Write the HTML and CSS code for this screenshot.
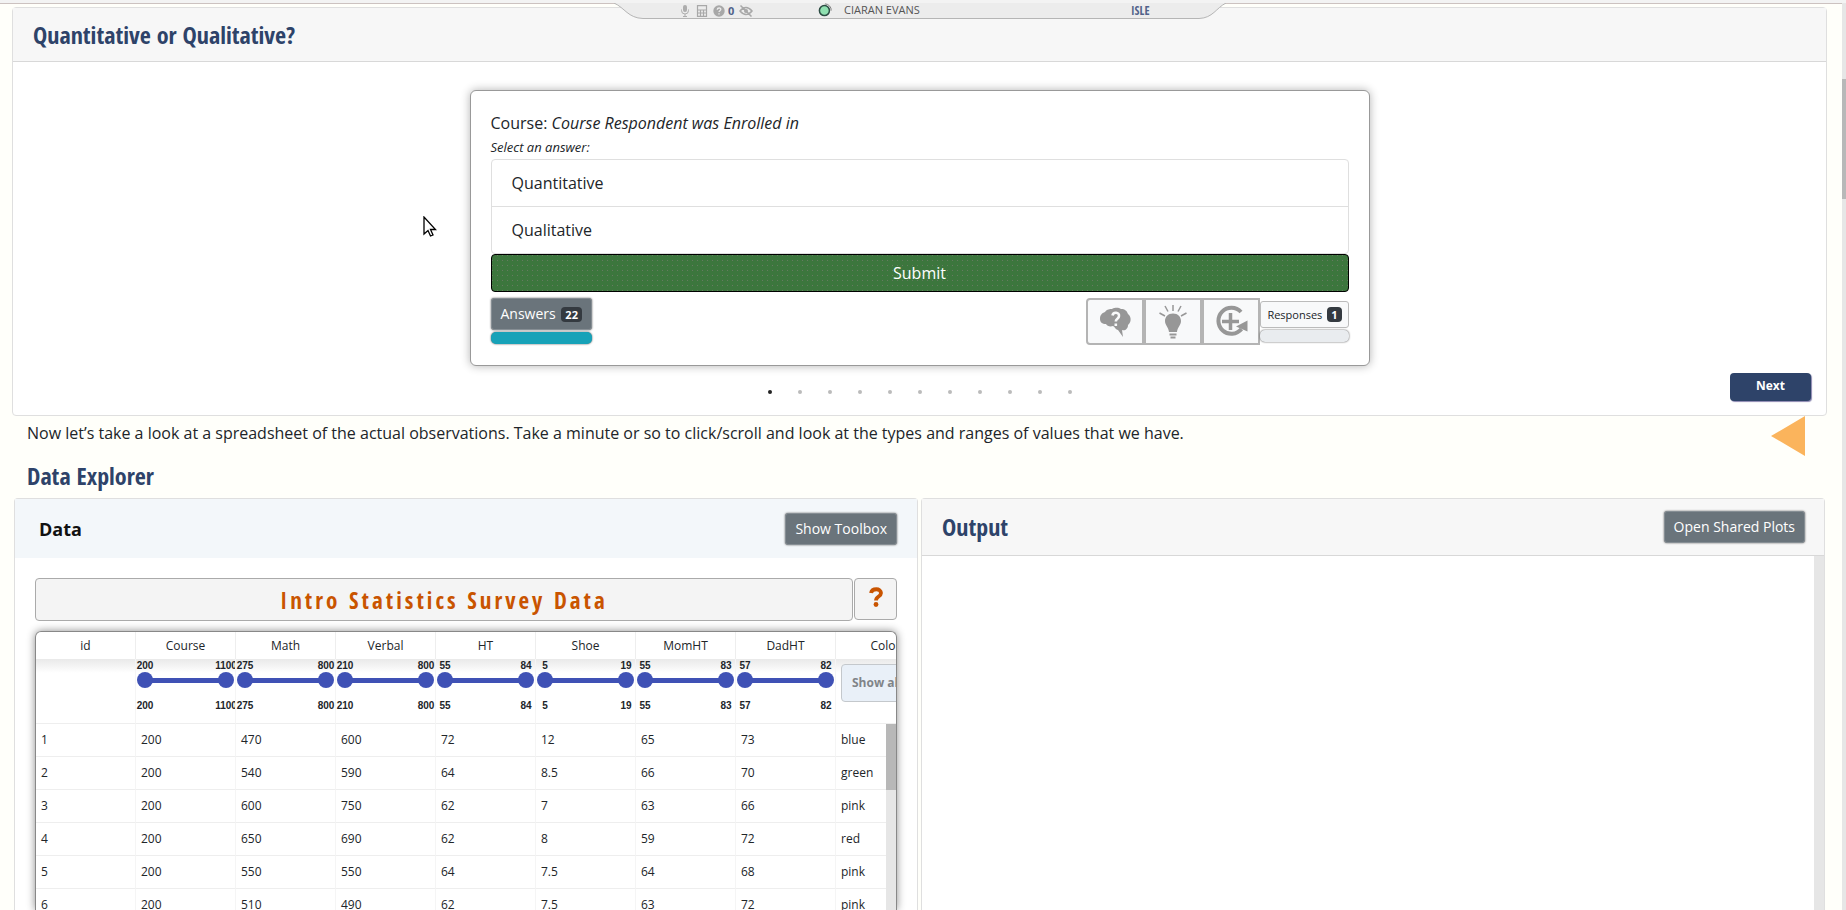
FILE: index.html
```html
<!DOCTYPE html>
<html lang="en">
<head>
<meta charset="utf-8">
<title>ISLE</title>
<link rel="stylesheet" href="styles.css">
</head>
<body>
<div class="page">
  <div class="statusbar">
    <svg class="statusbar-shape" viewBox="0 0 614 16" preserveAspectRatio="none" aria-hidden="true"><path d="M1 0C12 5 15 15 30 15.500H586C600 15 603 5 613 0" fill="#ececec" stroke="#b5b5b5"/></svg>
    <div class="status-icons">
      <svg viewBox="0 0 12 12" aria-hidden="true"><rect x="4" y="0" width="4" height="7" rx="2" fill="#adadad"/><path d="M2.500 4.500v1a3.500 3.500 0 0 0 7 0v-1M6 9v2.500M4 11.500h4" fill="none" stroke="#adadad"/></svg>
      <svg viewBox="0 0 12 12" aria-hidden="true"><path d="M1.500 .7h9v10.600h-9zM1.500 5h9M1.500 8h9M4.500 5v6.500M7.500 5v6.500" fill="none" stroke="#a8a8a8" stroke-width="1.200"/></svg>
      <svg viewBox="0 0 12 12" aria-hidden="true"><circle cx="6" cy="6" r="5.700" fill="#a8a8a8"/><path d="M4.200 4.700C4.400 2.400 7.900 2.500 7.800 4.500 7.700 5.700 6 5.700 6 7M6 8.300v1.200" fill="none" stroke="#ececec" stroke-width="1.300"/></svg>
      <b class="status-count">0</b>
      <svg viewBox="0 0 14 12" aria-hidden="true"><path d="M1 6Q7-1 13 6Q7 13 1 6zM1.500 .5l11 11" fill="none" stroke="#a8a8a8" stroke-width="1.500"/><circle cx="7" cy="6" r="2" fill="#a8a8a8"/></svg>
    </div>
    <svg class="status-dot" viewBox="0 0 12 12" aria-hidden="true"><circle cx="5.500" cy="6.500" r="4.300" fill="#8fe0b0" stroke="#2c4c43" stroke-width="1.300"/><path d="M6 .8A5.300 5.300 0 0 1 11.300 6.500" fill="none" stroke="#777" stroke-width=".8"/></svg>
    <span class="status-user">CIARAN EVANS</span>
    <span class="status-brand">ISLE</span>
  </div>

  <section class="card quiz">
    <header class="card-header"><h2 class="heading">Quantitative or Qualitative?</h2></header>
    <div class="quiz-body">
      <form class="question">
        <p class="question-title">Course: <i>Course Respondent was Enrolled in</i></p>
        <p class="question-hint">Select an answer:</p>
        <div class="choices">
          <button type="button" class="choice">Quantitative</button>
          <button type="button" class="choice">Qualitative</button>
        </div>
        <button type="button" class="submit">Submit</button>
        <div class="question-tools">
          <div class="answers">
            <button type="button" class="btn-gray">Answers <span class="badge">22</span></button>
            <div class="bar bar-teal"></div>
          </div>
          <div class="tool-group">
            <button type="button" class="tool" aria-label="Feedback: confused"><svg viewBox="0 -2 34 34"><path d="M2 12C2 8 4 6 7 5C9 2 12 2 14 2C18 0 21 1 23 2C27 2 29 4 30 7C34 10 33 16 30 18C30 22 27 24 24 23L25 30L20 23C18 23 17 20 15 19C12 20 9 19 8 17C4 17 2 15 2 12Z"/><path d="M14.500 8.500C15 4.500 21.500 5 21 9C21 12 17.800 11.500 17.800 14.500M17.800 16.500v2.600" fill="none" stroke="#f8f9fa" stroke-width="2.600"/></svg></button>
            <button type="button" class="tool" aria-label="Feedback: understood"><svg viewBox="0 0 34 36"><path d="M17 9.500C22 9.500 25 13 25 17C25 21 21.500 23 21 28H13C12.500 23 9 21 9 17C9 13 12 9.500 17 9.500Z"/><path d="M17 1v6M9 2l3 5.500M25 2l-3 5.500M3.500 9l5.500 3M30.500 9l-5.500 3" fill="none" stroke="#979797" stroke-width="1.500"/><path d="M13.500 30.500h7M14.500 33.500h5" fill="none" stroke="#979797" stroke-width="2"/></svg></button>
            <button type="button" class="tool" aria-label="Show responses"><svg viewBox="-1 0 34 34"><path d="M26 7A13 13 0 1 0 26.500 24" fill="none" stroke="#979797" stroke-width="4"/><path d="M15.500 8v17M7 16.500h17" stroke="#979797" stroke-width="3.500"/><path d="M32.500 15.500V26.500L21 21.500Z"/></svg></button>
            <div class="responses">
              <button type="button" class="btn-light">Responses <span class="badge">1</span></button>
              <div class="bar bar-light"></div>
            </div>
          </div>
        </div>
      </form>
      <div class="pager">
        <div class="dots"><i class="dot dot-on"></i><i class="dot"></i><i class="dot"></i><i class="dot"></i><i class="dot"></i><i class="dot"></i><i class="dot"></i><i class="dot"></i><i class="dot"></i><i class="dot"></i><i class="dot"></i></div>
        <button type="button" class="next">Next</button>
      </div>
    </div>
    <svg class="pointer" viewBox="0 0 14 22" aria-hidden="true"><path d="M1 1V18L5 14.500L7.500 20L10 19L7.500 13.500H12.500Z" fill="#fff" stroke="#000" stroke-width="1.300"/></svg>
  </section>

  <div class="intro">
    <p class="intro-text">Now let’s take a look at a spreadsheet of the actual observations. Take a minute or so to click/scroll and look at the types and ranges of values that we have.</p>
    <svg class="marker" viewBox="0 0 34 40" aria-hidden="true"><path d="M0 20L34 0V40Z" fill="#fbb45c"/></svg>
  </div>
  <h2 class="heading explorer-title">Data Explorer</h2>

  <div class="explorer">
    <section class="card data">
      <header class="data-header"><h3 class="data-title">Data</h3><button type="button" class="btn-gray">Show Toolbox</button></header>
      <div class="data-body">
        <div class="dataset">
          <button type="button" class="dataset-name">Intro Statistics Survey Data</button>
          <button type="button" class="dataset-help" aria-label="Dataset help"><svg viewBox="0 0 14 20"><path d="M2 6C3 1 12 1 12 6C12 10 7 9 7 13.500" fill="none" stroke="#c95400" stroke-width="3.800"/><circle cx="7" cy="17.500" r="2.400" fill="#c95400"/></svg></button>
        </div>
        <div class="grid-frame">
          <table class="grid">
            <thead>
              <tr class="names"><th>id</th><th>Course</th><th>Math</th><th>Verbal</th><th>HT</th><th>Shoe</th><th>MomHT</th><th>DadHT</th><th>Color</th></tr>
              <tr class="filters">
                <td></td>
                <td><div class="range"><div class="ends"><span>200</span><span>1100</span></div><div class="track"><input type="range" min="200" max="1100" value="200" aria-label="Course minimum"><input type="range" min="200" max="1100" value="1100" aria-label="Course maximum"></div><div class="ends"><span>200</span><span>1100</span></div></div></td>
                <td><div class="range"><div class="ends"><span>275</span><span>800</span></div><div class="track"><input type="range" min="275" max="800" value="275" aria-label="Math minimum"><input type="range" min="275" max="800" value="800" aria-label="Math maximum"></div><div class="ends"><span>275</span><span>800</span></div></div></td>
                <td><div class="range"><div class="ends"><span>210</span><span>800</span></div><div class="track"><input type="range" min="210" max="800" value="210" aria-label="Verbal minimum"><input type="range" min="210" max="800" value="800" aria-label="Verbal maximum"></div><div class="ends"><span>210</span><span>800</span></div></div></td>
                <td><div class="range"><div class="ends"><span>55</span><span>84</span></div><div class="track"><input type="range" min="55" max="84" value="55" aria-label="HT minimum"><input type="range" min="55" max="84" value="84" aria-label="HT maximum"></div><div class="ends"><span>55</span><span>84</span></div></div></td>
                <td><div class="range"><div class="ends"><span>5</span><span>19</span></div><div class="track"><input type="range" min="5" max="19" value="5" aria-label="Shoe minimum"><input type="range" min="5" max="19" value="19" aria-label="Shoe maximum"></div><div class="ends"><span>5</span><span>19</span></div></div></td>
                <td><div class="range"><div class="ends"><span>55</span><span>83</span></div><div class="track"><input type="range" min="55" max="83" value="55" aria-label="MomHT minimum"><input type="range" min="55" max="83" value="83" aria-label="MomHT maximum"></div><div class="ends"><span>55</span><span>83</span></div></div></td>
                <td><div class="range"><div class="ends"><span>57</span><span>82</span></div><div class="track"><input type="range" min="57" max="82" value="57" aria-label="DadHT minimum"><input type="range" min="57" max="82" value="82" aria-label="DadHT maximum"></div><div class="ends"><span>57</span><span>82</span></div></div></td>
                <td><select class="color-filter" aria-label="Color filter"><option>Show all</option></select></td>
              </tr>
            </thead>
            <tbody>
              <tr><td>1</td><td>200</td><td>470</td><td>600</td><td>72</td><td>12</td><td>65</td><td>73</td><td>blue</td></tr>
              <tr><td>2</td><td>200</td><td>540</td><td>590</td><td>64</td><td>8.5</td><td>66</td><td>70</td><td>green</td></tr>
              <tr><td>3</td><td>200</td><td>600</td><td>750</td><td>62</td><td>7</td><td>63</td><td>66</td><td>pink</td></tr>
              <tr><td>4</td><td>200</td><td>650</td><td>690</td><td>62</td><td>8</td><td>59</td><td>72</td><td>red</td></tr>
              <tr><td>5</td><td>200</td><td>550</td><td>550</td><td>64</td><td>7.5</td><td>64</td><td>68</td><td>pink</td></tr>
              <tr><td>6</td><td>200</td><td>510</td><td>490</td><td>62</td><td>7.5</td><td>63</td><td>72</td><td>pink</td></tr>
            </tbody>
          </table>
          <div class="grid-scroll"><div class="grid-thumb"></div></div>
        </div>
      </div>
    </section>
    <section class="card output">
      <header class="card-header output-header"><h2 class="heading">Output</h2><button type="button" class="btn-gray">Open Shared Plots</button></header>
      <div class="output-body"></div>
    </section>
  </div>
  <div class="page-scroll"><div class="page-thumb"></div></div>
</div>
</body>
</html>
```
FILE: styles.css
```css
* { box-sizing: border-box; }
body {
  margin: 0;
  background: #fffffa;
  color: #212529;
  font: 16px/24px "Open Sans", "Noto Sans", sans-serif;
}
button, select, input { font: inherit; margin: 0; }
h2, h3, p { margin: 0; }

.page {
  position: relative;
  display: flex;
  flex-direction: column;
  height: 100vh;
  overflow: hidden;
  padding: 7px 19px 0 12px;
}
.page::before {
  content: "";
  position: absolute;
  top: 0;
  left: 0;
  right: 0;
  height: 3px;
  background: #f3f3f3;
  border-bottom: 1px solid #ccc2c0;
}

.statusbar {
  position: absolute;
  z-index: 2;
  top: 3px;
  left: 50%;
  width: 614px;
  height: 16px;
  margin-left: -310px;
  font-size: 11px;
  line-height: 14px;
  color: #555;
}
.statusbar-shape { position: absolute; width: 100%; height: 16px; }
.status-icons { position: absolute; left: 66px; display: flex; align-items: center; gap: 5px; height: 15px; }
.status-icons svg { width: 12px; height: 12px; }
.status-icons svg:last-child { width: 14px; }
.status-count { color: #51628a; margin-left: -2px; }
.status-dot { position: absolute; left: 205px; width: 14px; height: 14px; }
.status-user { position: absolute; left: 231px; }
.status-brand {
  position: absolute;
  left: 518px;
  color: #51628a;
  font: bold 12px/15px "Open Sans Condensed", "Liberation Sans Narrow", "Open Sans", sans-serif;
}

.card { border: 1px solid #dfdfdf; border-radius: 4px; background: #fff; }
.card-header { padding: 12px 20px 11px; background: #f7f7f7; border-bottom: 1px solid #d8d8d8; }
.heading {
  color: #2e4369;
  font: bold 24px/30px "Open Sans Condensed", "Liberation Sans Narrow", "Open Sans", sans-serif;
}

.quiz { position: relative; flex: none; }
.quiz-body { padding: 28px 15px 14px; }
.question {
  width: 900px;
  max-width: 100%;
  margin: 0 auto;
  padding: 20px;
  border: 1px solid #999;
  border-radius: 6px;
  background: #fff;
  box-shadow: 0 0 10px rgba(0, 0, 0, 0.3);
}
.question-title { line-height: 24px; }
.question-hint { font-size: 13px; line-height: 24px; font-style: italic; }
.choices { border: 1px solid #dfdfdf; border-radius: 4px; }
.choice {
  display: block;
  width: 100%;
  height: 46px;
  padding: 0 20px;
  border: 0;
  background: none;
  color: inherit;
  text-align: left;
}
.choice + .choice { height: 47px; border-top: 1px solid #dfdfdf; }
.submit {
  display: block;
  width: 100%;
  height: 38px;
  border: 1px solid #000;
  border-radius: 4px;
  color: #fff;
  background:
    conic-gradient(from 270deg at 1px 1px, #667b60 90deg, transparent 0) 0 0 / 5px 5px,
    #3c763d;
}
.question-tools { display: flex; justify-content: space-between; margin-top: 6px; }
.btn-gray {
  height: 32px;
  padding: 0 9px;
  border: 1px solid #868e94;
  border-radius: 3px;
  background: #6a747b;
  color: #fff;
  font-size: 14px;
  box-shadow: 0 0 2px #555;
}
.badge {
  display: inline-block;
  margin-left: 2px;
  padding: 0 4px;
  border-radius: 4px;
  background: #343a40;
  color: #fff;
  font-size: 11px;
  font-weight: bold;
  line-height: 15px;
}
.bar { height: 12px; margin-top: 2px; border-radius: 5px; box-shadow: 0 0 2px #444; }
.bar-teal { background: #17a2b8; }
.bar-light { background: #e9ecef; }
.tool-group { display: flex; align-items: center; }
.tool {
  width: 58px;
  height: 47px;
  padding: 0;
  border: 2px solid #b4b4b4;
  background: #f8f9fa;
}
.tool:first-child { border-radius: 4px 0 0 4px; }
.tool svg { display: block; width: 34px; height: 36px; margin: 0 auto; fill: #979797; }
.btn-light {
  display: block;
  width: 100%;
  height: 27px;
  padding: 0 6px;
  border: 1px solid #bbb;
  border-radius: 3px;
  background: #f8f9fa;
  color: #212529;
  font-size: 11px;
}

.pager { display: grid; grid-template-columns: 1fr auto 1fr; align-items: center; margin-top: 7px; }
.dots { grid-column: 2; display: flex; gap: 26px; padding-top: 10px; }
.dot { width: 4px; height: 4px; border-radius: 2px; background: #bbb; }
.dot-on { background: #222; }
.next {
  justify-self: end;
  width: 81px;
  height: 28px;
  padding: 0 0 3px;
  border: 0;
  border-radius: 4px;
  background: #2e4369;
  color: #fff;
  font-size: 12px;
  font-weight: bold;
  box-shadow: 1px 1px 1px #8a86b0;
}
.pointer { position: absolute; left: 410px; top: 208px; width: 14px; height: 22px; }

.intro { display: flex; justify-content: space-between; padding: 0 22px 0 15px; }
.intro-text { padding-top: 5px; }
.marker { flex: none; width: 34px; height: 40px; }
.explorer-title { padding: 5px 15px 7px; }

.explorer { display: grid; grid-template-columns: 1fr 1fr; gap: 3px; flex: 1; min-height: 0; padding: 0 2px; }
.explorer .card { display: flex; flex-direction: column; min-width: 0; min-height: 0; border-bottom: 0; border-radius: 4px 4px 0 0; }
.data-header { display: flex; justify-content: space-between; align-items: center; flex: none; height: 59px; padding: 0 20px 0 24px; background: #f3f7fa; }
.data-title { color: #111; font-size: 18px; }
.data-body { display: flex; flex-direction: column; flex: 1; min-height: 0; padding: 20px 20px 0; }
.dataset { display: flex; gap: 1px; flex: none; }
.dataset-name {
  flex: 1;
  height: 43px;
  border: 1px solid #aaa;
  border-radius: 4px;
  background: #f4f4f4;
  color: #c95400;
  font: bold 23px/30px "Open Sans Condensed", "Liberation Sans Narrow", "Open Sans", sans-serif;
  letter-spacing: 3px;
}
.dataset-help { width: 43px; height: 42px; padding: 0 0 4px; border: 1px solid #aaa; border-radius: 4px; background: #f4f4f4; }
.dataset-help svg { display: block; width: 14px; height: 20px; margin: 0 auto; }

.grid-frame {
  position: relative;
  flex: 1;
  min-height: 0;
  margin-top: 10px;
  overflow: hidden;
  border: 1px solid #888;
  border-bottom: 0;
  border-radius: 6px 6px 0 0;
  box-shadow: 0 0 8px rgba(0, 0, 0, 0.45);
}
.grid { width: 900px; table-layout: fixed; border-collapse: separate; border-spacing: 0; font-size: 12px; line-height: 18px; }
.grid th, .grid td { padding: 0 0 0 5px; text-align: left; overflow: hidden; border-right: 1px solid #f5f5f5; }
.grid .names th { height: 27px; padding: 0; text-align: center; font-weight: normal; border-right-color: #eee; }
.grid .filters td { height: 65px; padding: 0; vertical-align: top; border-bottom: 1px solid #eee; background: linear-gradient(#e9e9e9, #fff 14px); }
.grid tbody td { height: 33px; border-bottom: 1px solid #eee; }
.range { padding: 0 1px; overflow: hidden; }
.ends { display: flex; justify-content: space-between; font: bold 10px/13px "Liberation Sans", Arial, sans-serif; }
.ends span { display: flex; justify-content: center; width: 16px; }
.track { display: grid; align-items: center; height: 16px; margin-bottom: 11px; background: linear-gradient(#3f51b5, #3f51b5) center / 81px 5px no-repeat; }
.track input { grid-area: 1 / 1; width: 100%; min-width: 0; height: 16px; appearance: none; background: none; pointer-events: none; }
.track input::-webkit-slider-thumb { appearance: none; width: 16px; height: 16px; border: 0; border-radius: 8px; background: #3f51b5; pointer-events: auto; }
.color-filter {
  appearance: none;
  width: 110px;
  height: 38px;
  margin: 5px 0 0 5px;
  padding: 0 10px;
  border: 1px solid #c4c8cc;
  border-radius: 4px;
  background: #e9f0f8;
  color: #808488;
  font-weight: bold;
}
.grid-scroll { position: absolute; top: 92px; right: 0; bottom: 0; width: 10px; background: #e6e6e6; }
.grid-thumb { height: 66px; background: #b8b8b8; }

.output-header { display: flex; justify-content: space-between; align-items: center; padding-right: 19px; padding-bottom: 12px; }
.output-body { flex: 1; border-right: 10px solid #e6e6e6; }

.page-scroll { position: absolute; top: 3px; right: 0; bottom: 0; width: 4px; padding-top: 76px; background: #e6e6e6; }
.page-thumb { height: 120px; background: #b8b8b8; }
```
